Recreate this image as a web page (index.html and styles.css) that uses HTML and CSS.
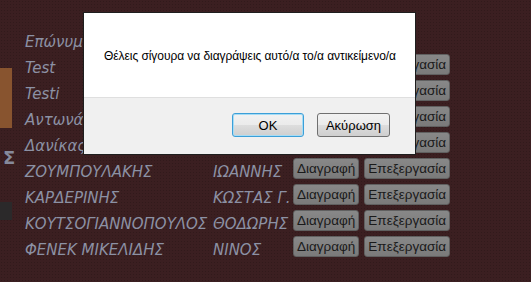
FILE: index.html
```html
<!DOCTYPE html>
<html lang="el">
<head>
    <meta charset="UTF-8">
    <meta name="viewport" content="width=device-width, initial-scale=1.0">
    <title>Πελάτες</title>
    <link rel="stylesheet" href="styles.css">
</head>
<body>
    <div class="page">
        <aside class="side">
            <div class="side-tab"></div>
            <div class="side-sigma">Σ</div>
            <div class="side-dark"></div>
        </aside>
        <div class="list">
            <div class="row head">
                <span class="surname">Επώνυμο</span>
                <span class="name">Όνομα</span>
            </div>
            <div class="row">
                <span class="surname">Test</span>
                <span class="name">Test</span>
                <button class="btn">Διαγραφή</button>
                <button class="btn">Επεξεργασία</button>
            </div>
            <div class="row">
                <span class="surname">Testi</span>
                <span class="name">Testi</span>
                <button class="btn">Διαγραφή</button>
                <button class="btn">Επεξεργασία</button>
            </div>
            <div class="row">
                <span class="surname">Αντωνάκης</span>
                <span class="name">Γιώργος</span>
                <button class="btn">Διαγραφή</button>
                <button class="btn">Επεξεργασία</button>
            </div>
            <div class="row">
                <span class="surname">Δανίκας</span>
                <span class="name">Νίκος</span>
                <button class="btn">Διαγραφή</button>
                <button class="btn">Επεξεργασία</button>
            </div>
            <div class="row">
                <span class="surname">ΖΟΥΜΠΟΥΛΑΚΗΣ</span>
                <span class="name">ΙΩΑΝΝΗΣ</span>
                <button class="btn">Διαγραφή</button>
                <button class="btn">Επεξεργασία</button>
            </div>
            <div class="row">
                <span class="surname">ΚΑΡΔΕΡΙΝΗΣ</span>
                <span class="name">ΚΩΣΤΑΣ Γ.</span>
                <button class="btn">Διαγραφή</button>
                <button class="btn">Επεξεργασία</button>
            </div>
            <div class="row">
                <span class="surname">ΚΟΥΤΣΟΓΙΑΝΝΟΠΟΥΛΟΣ</span>
                <span class="name">ΘΟΔΩΡΗΣ</span>
                <button class="btn">Διαγραφή</button>
                <button class="btn">Επεξεργασία</button>
            </div>
            <div class="row">
                <span class="surname">ΦΕΝΕΚ ΜΙΚΕΛΙΔΗΣ</span>
                <span class="name">ΝΙΝΟΣ</span>
                <button class="btn">Διαγραφή</button>
                <button class="btn">Επεξεργασία</button>
            </div>
        </div>
    </div>

    <div class="dialog">
        <div class="dialog-body">Θέλεις σίγουρα να διαγράψεις αυτό/α το/α αντικείμενο/α</div>
        <div class="dialog-foot">
            <button class="dlg-btn ok">OK</button>
            <button class="dlg-btn">Ακύρωση</button>
        </div>
    </div>
</body>
</html>
```

FILE: styles.css
```css
html, body {
    margin: 0;
    padding: 0;
    height: 100%;
}
body {
    background-color: #3b1f21;
    background-image: radial-gradient(#311a1b 0.8px, transparent 1px);
    background-size: 3px 3px;
    font-family: 'DejaVu Sans', Verdana, sans-serif;
    overflow: hidden;
}
.page {
    display: flex;
}
.side {
    width: 12px;
    padding-top: 68px;
    display: flex;
    flex-direction: column;
}
.side-tab {
    height: 60px;
    background: #88542f;
}
.side-sigma {
    margin-top: 22px;
    padding-left: 3px;
    font-size: 18px;
    line-height: 16px;
    font-weight: bold;
    color: #858a9c;
    white-space: nowrap;
}
.side-dark {
    margin-top: 36px;
    height: 18px;
    background: #2b292a;
}
.list {
    padding-top: 28px;
    padding-left: 13px;
}
.row {
    display: flex;
    align-items: center;
    height: 26px;
}
.row .btn {
    align-self: flex-start;
}
.surname, .name {
    font-style: italic;
    font-size: 15px;
    color: #8c91a4;
    white-space: nowrap;
    padding-top: 2px;
}
.surname {
    width: 188px;
}
.name {
    width: 80px;
}
.btn {
    height: 21px;
    margin-right: 5px;
    padding: 0 3px;
    background: linear-gradient(#888888, #7a7a7a);
    border: 1px solid #606060;
    border-radius: 3px;
    color: #1a1a1a;
    font-family: 'Liberation Sans', Arial, sans-serif;
    font-size: 13.5px;
    line-height: 19px;
}

.dialog {
    position: absolute;
    left: 83px;
    top: 12px;
    width: 331px;
    height: 141px;
    border: 1px solid #1e1e1e;
    background: #f0f0f0;
    display: flex;
    flex-direction: column;
    font-family: 'Liberation Sans', Arial, sans-serif;
}
.dialog-body {
    height: 85px;
    background: #ffffff;
    border-bottom: 1px solid #dfdfdf;
    box-sizing: border-box;
    padding: 36px 0 0 20px;
    font-size: 12px;
    letter-spacing: -0.06px;
    color: #000;
}
.dialog-foot {
    display: flex;
    justify-content: flex-end;
    gap: 13px;
    padding: 15px 25px 0 0;
}
.dlg-btn {
    width: 73px;
    height: 24px;
    border: 1px solid #707070;
    border-radius: 3px;
    background: linear-gradient(#f2f2f2 0%, #ebebeb 50%, #dddddd 51%, #cfcfcf 100%);
    font-family: 'Liberation Sans', Arial, sans-serif;
    font-size: 13px;
    color: #000;
    padding: 0;
}
.dlg-btn.ok {
    width: 72px;
    border-color: #3c9fd8;
    box-shadow: inset 0 0 0 1px #a6dcf5;
}
```
